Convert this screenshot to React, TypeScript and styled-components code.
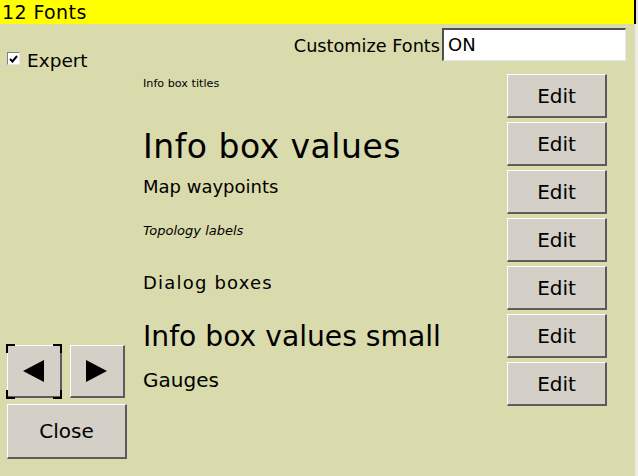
import React from "react";
import styled, { createGlobalStyle, css } from "styled-components";

const Global = createGlobalStyle`
  html, body { margin: 0; padding: 0; background: #e6e6dc; }
  body { font-family: "DejaVu Sans", "Liberation Sans", sans-serif; color: #000; }
  * { box-sizing: border-box; }
`;

const Window = styled.div`
  width: 638px;
  height: 476px;
  display: grid;
  grid-template-rows: 24px 1fr;
  overflow: hidden;
`;

const TitleBar = styled.div`
  background: #ffff00;
  border-right: 2px solid #000;
  margin-right: 2px;
  font-size: 19px;
  line-height: 25px;
  padding-left: 2px;
  letter-spacing: 0.4px;
  white-space: nowrap;
`;

const Body = styled.div`
  background: #dadbac;
  border-right: 3px solid #ecece4;
  display: grid;
  grid-template-columns: 136px 1fr;
`;

const Side = styled.div`
  display: flex;
  flex-direction: column;
  padding: 24px 0 17px 7px;
`;

const CheckRow = styled.div`
  display: flex;
  align-items: flex-start;
  gap: 7px;
`;

const CheckBox = styled.span`
  width: 13px;
  height: 13px;
  margin-top: 4px;
  background: #fff;
  border: 1px solid;
  border-color: #808080 #e8e8e8 #e8e8e8 #808080;
  display: flex;
  align-items: center;
  justify-content: center;
`;

const CheckLabel = styled.span`
  font-size: 18.5px;
  line-height: 26px;
`;

const Spacer = styled.div`
  flex: 1;
`;

const NavRow = styled.div`
  display: flex;
  gap: 8px;
  margin-bottom: 6px;
`;

const buttonFace = css`
  background: #d4d0c8;
  border-style: solid;
  border-width: 1px 2px 2px 1px;
  border-color: #ffffff #5c5c5c #5c5c5c #ffffff;
  display: flex;
  align-items: center;
  justify-content: center;
  font-family: "DejaVu Sans", sans-serif;
  color: #000;
  padding: 0;
`;

const NavButton = styled.div<{ $focused?: boolean }>`
  ${buttonFace}
  position: relative;
  width: 55px;
  height: 53px;
  ${(p) =>
    p.$focused &&
    css`
      &::before {
        content: "";
        position: absolute;
        left: -2px;
        right: -2px;
        top: -2px;
        bottom: -3px;
        pointer-events: none;
        background:
          linear-gradient(#000, #000) left top / 9px 2px no-repeat,
          linear-gradient(#000, #000) left top / 2px 9px no-repeat,
          linear-gradient(#000, #000) right top / 9px 2px no-repeat,
          linear-gradient(#000, #000) right top / 2px 9px no-repeat,
          linear-gradient(#000, #000) left bottom / 9px 2px no-repeat,
          linear-gradient(#000, #000) left bottom / 2px 9px no-repeat,
          linear-gradient(#000, #000) right bottom / 9px 2px no-repeat,
          linear-gradient(#000, #000) right bottom / 2px 9px no-repeat;
      }
    `}
`;

const CloseButton = styled.div`
  ${buttonFace}
  width: 120px;
  height: 55px;
  font-size: 20px;
`;

const Main = styled.div`
  display: flex;
  flex-direction: column;
  padding: 4px 9px 0 7px;
`;

const CustomRow = styled.div`
  display: flex;
  justify-content: flex-end;
  align-items: center;
  gap: 2px;
  height: 33px;
`;

const CustomLabel = styled.span`
  font-size: 17.7px;
  padding-top: 2px;
`;

const Field = styled.div`
  width: 184px;
  height: 33px;
  background: #fff;
  border-style: solid;
  border-width: 2px 1px 1px 2px;
  border-color: #505050 #e8e8e8 #e8e8e8 #505050;
  font-size: 18px;
  padding: 4px 0 0 4px;
`;

const FontList = styled.div`
  margin-top: 13px;
  padding-right: 19px;
  display: flex;
  flex-direction: column;
`;

const FontRow = styled.div`
  display: grid;
  grid-template-columns: 1fr 100px;
  height: 48px;
  align-items: start;
`;

const Sample = styled.div<{
  $size: number;
  $top: number;
  $spacing?: number;
  $italic?: boolean;
}>`
  font-size: ${(p) => p.$size}px;
  line-height: 1;
  padding-top: ${(p) => p.$top}px;
  letter-spacing: ${(p) => p.$spacing ?? 0}px;
  font-style: ${(p) => (p.$italic ? "oblique" : "normal")};
  white-space: nowrap;
`;

const EditButton = styled.div`
  ${buttonFace}
  width: 100px;
  height: 44px;
  font-size: 20px;
`;

const fonts = [
  { label: "Info box titles", size: 11.2, top: 4 },
  { label: "Info box values", size: 33, top: 8, spacing: 0.5 },
  { label: "Map waypoints", size: 18, top: 8 },
  { label: "Topology labels", size: 13, top: 6, italic: true },
  { label: "Dialog boxes", size: 18, top: 8, spacing: 1.2 },
  { label: "Info box values small", size: 28.2, top: 9 },
  { label: "Gauges", size: 20, top: 8 },
];

const Check = () => (
  <svg width="9" height="8" viewBox="0 0 9 8">
    <path d="M1 4 L3.5 6.5 L8 1" stroke="#000" strokeWidth="2" fill="none" />
  </svg>
);

const Arrow = ({ dir }: { dir: "left" | "right" }) => (
  <svg width="22" height="22" viewBox="0 0 22 22">
    {dir === "left" ? (
      <polygon points="0,11 21,0 21,22" fill="#000" />
    ) : (
      <polygon points="21,11 0,0 0,22" fill="#000" />
    )}
  </svg>
);

export default function App() {
  return (
    <>
      <Global />
      <Window>
        <TitleBar>12 Fonts</TitleBar>
        <Body>
          <Side>
            <CheckRow>
              <CheckBox>
                <Check />
              </CheckBox>
              <CheckLabel>Expert</CheckLabel>
            </CheckRow>
            <Spacer />
            <NavRow>
              <NavButton $focused>
                <Arrow dir="left" />
              </NavButton>
              <NavButton>
                <Arrow dir="right" />
              </NavButton>
            </NavRow>
            <CloseButton>Close</CloseButton>
          </Side>
          <Main>
            <CustomRow>
              <CustomLabel>Customize Fonts</CustomLabel>
              <Field>ON</Field>
            </CustomRow>
            <FontList>
              {fonts.map((f) => (
                <FontRow key={f.label}>
                  <Sample
                    $size={f.size}
                    $top={f.top}
                    $spacing={f.spacing}
                    $italic={f.italic}
                  >
                    {f.label}
                  </Sample>
                  <EditButton>Edit</EditButton>
                </FontRow>
              ))}
            </FontList>
          </Main>
        </Body>
      </Window>
    </>
  );
}
